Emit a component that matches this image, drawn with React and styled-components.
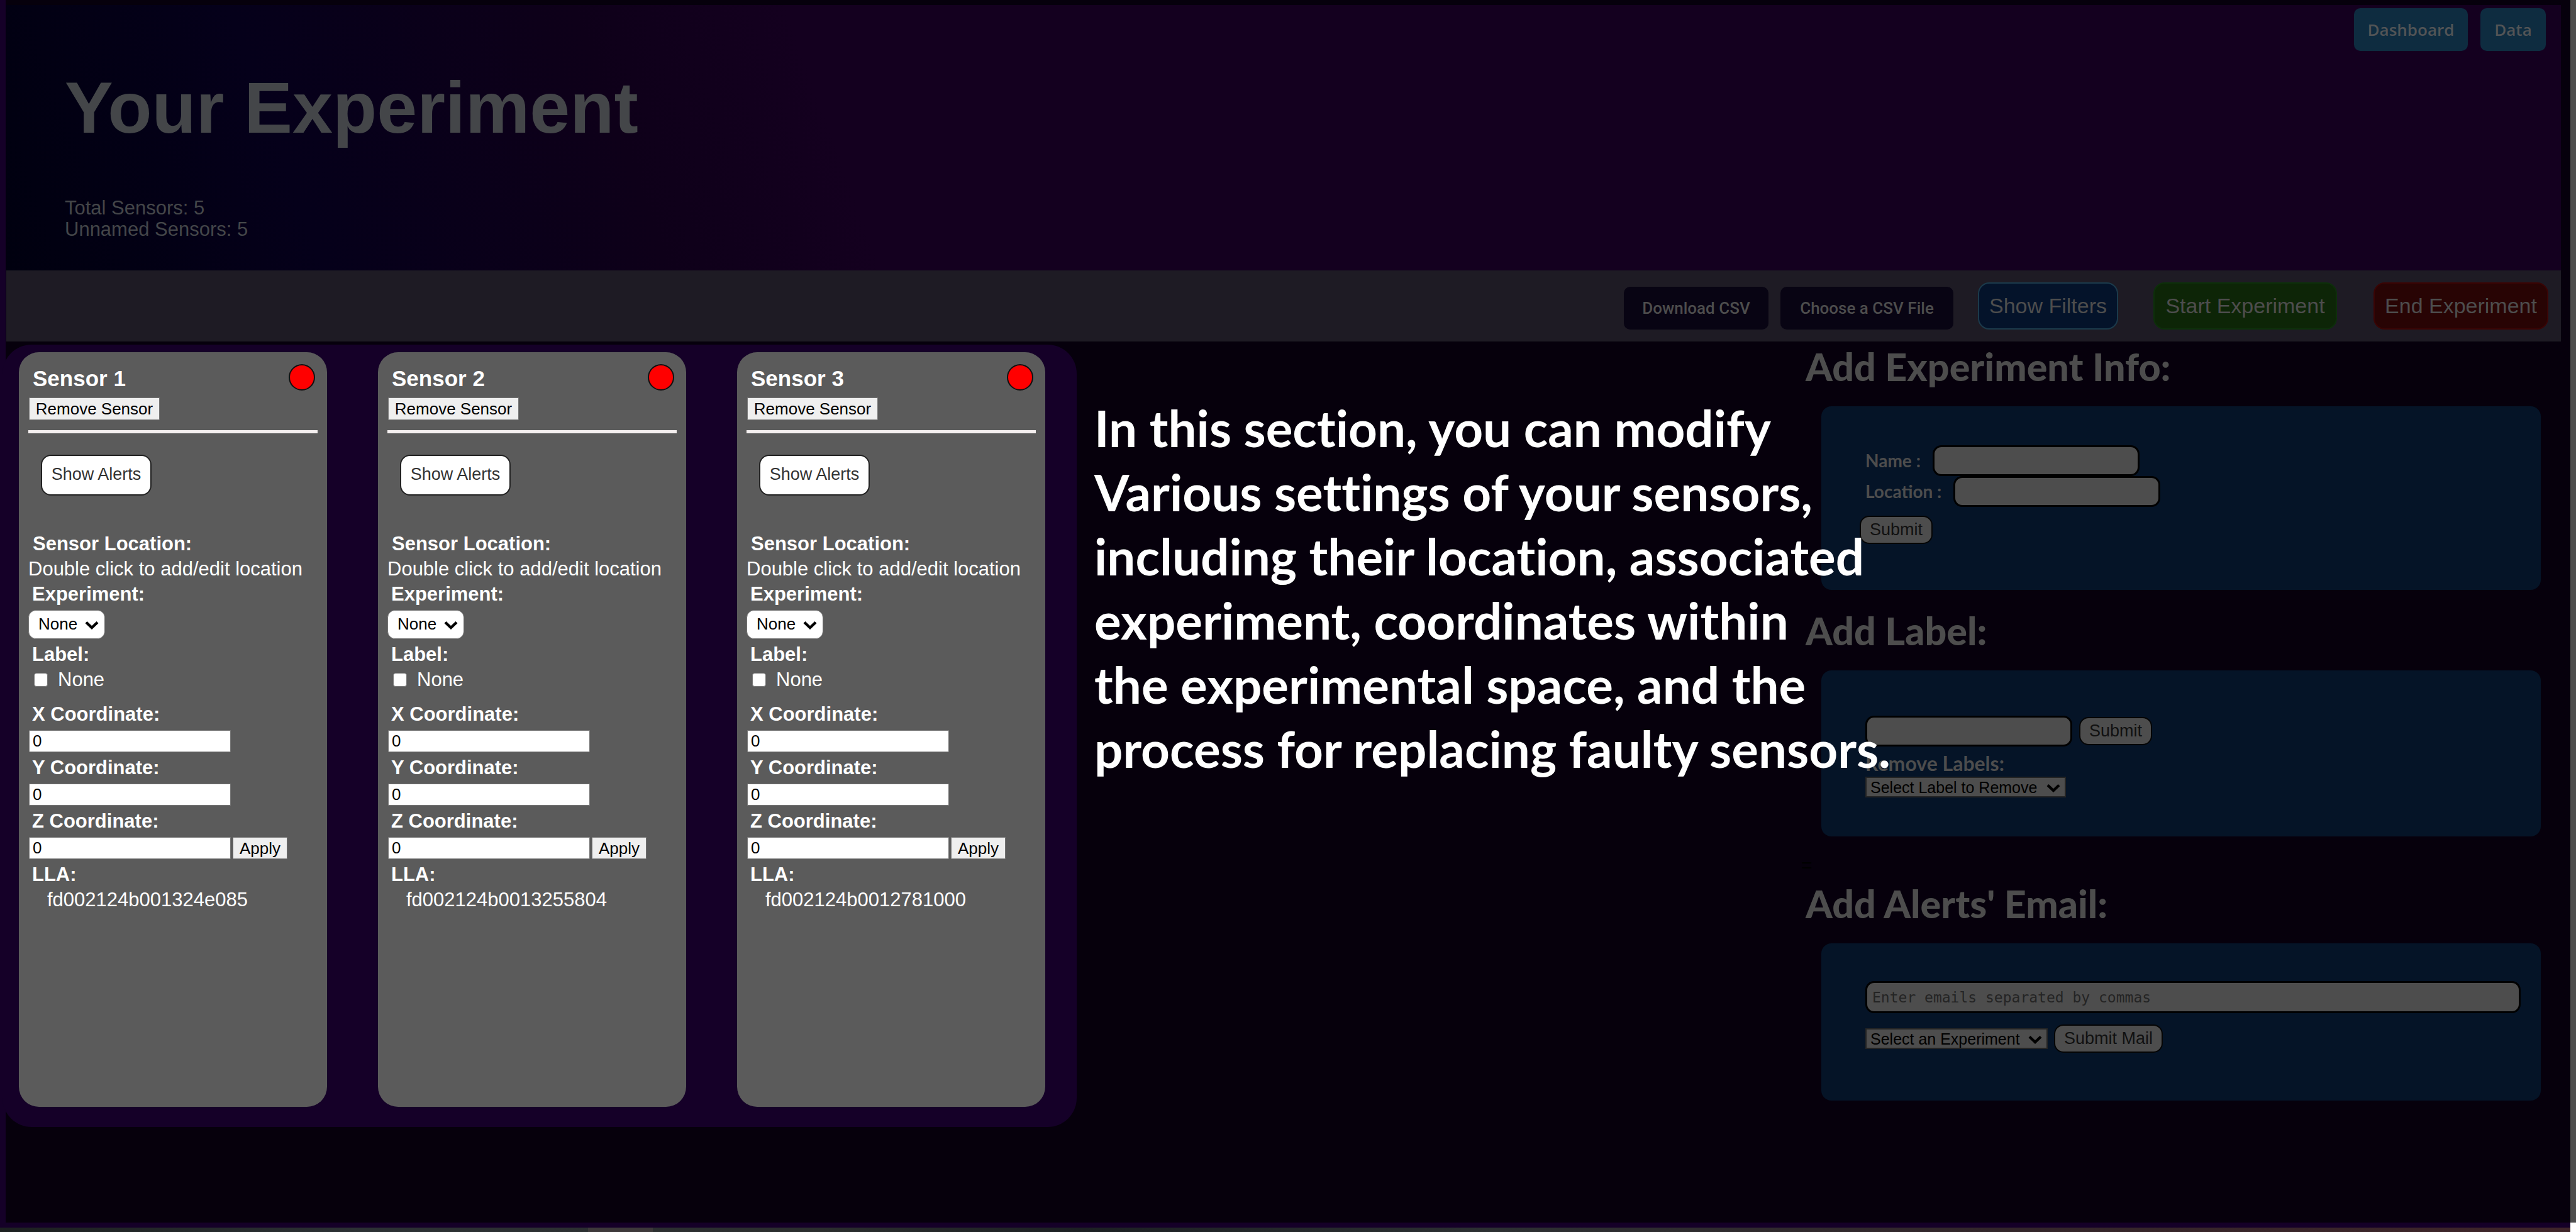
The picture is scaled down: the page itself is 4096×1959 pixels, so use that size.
import React, { useId } from "react";
import styled, { createGlobalStyle, css } from "styled-components";

const sans = `"Liberation Sans", Arial, sans-serif`;
const humanist = `Lato, "Open Sans", sans-serif`;

const GlobalStyle = createGlobalStyle`
  *, *::before, *::after { box-sizing: border-box; }
  html, body { margin: 0; }
  body { background: #150028; font-family: ${sans}; }
  button, input, select { margin: 0; font-family: ${sans}; }
  h1, h2, h3, p { margin: 0; }
`;

const Screen = styled.div`
  position: relative;
  display: flex;
  min-height: 100vh;
  overflow: hidden;
  background: #150028;
`;

const Desktop = styled.div`
  flex: 1;
  min-width: 0;
  display: flex;
  flex-direction: column;
`;

const Page = styled.div`
  flex: 1;
  margin: 0 0 8px 9px;
  padding: 8px 15px 0 1px;
  background: #06000c;
`;

const ScrollTrack = styled.div`
  width: 9px;
  border-bottom: 15px solid #fff;
  background: #4d4d4d;
`;

const TaskBar = styled.footer`
  height: 7px;
  background: linear-gradient(90deg, #1c2020 0%, #2c3134 14%, #2b2e2e 32%, #1c2023 42%, #2c3032 58%, #33262a 78%, #3f2529 100%);
`;

const TaskMark = styled.div`
  width: 103px;
  height: 7px;
  margin-left: 935px;
  background: #3d393a;
`;

const Header = styled.header`
  display: flex;
  justify-content: space-between;
  height: 422px;
  background: linear-gradient(70deg, #00000f 0%, #05001a 12%, #0e0019 25%, #14001f 33%, #14001f 100%);
`;

const Intro = styled.div`
  padding: 97px 0 0 93px;
  color: #444649;
`;

const Title = styled.h1`
  font-size: 115px;
  line-height: 132px;
`;

const Counts = styled.p`
  margin-top: 77px;
  font-size: 31px;
  line-height: 34px;
`;

const Nav = styled.nav`
  display: flex;
  align-items: flex-start;
  gap: 20px;
  padding: 5px 24px 0 0;
`;

const NavLink = styled.a`
  width: ${(p) => p.$width}px;
  border-radius: 10px;
  background: #0e2c40;
  color: #525456;
  font: 600 26px/68px "Open Sans", "Noto Sans", sans-serif;
  text-align: center;
  text-decoration: none;
`;

const Toolbar = styled.div`
  display: flex;
  align-items: flex-end;
  justify-content: flex-end;
  height: 113px;
  padding: 0 20px 19px 0;
  background: #1e1b24;
`;

const FileButton = styled.button`
  width: ${(p) => p.$width}px;
  height: 68px;
  margin-right: ${(p) => p.$after}px;
  padding: 0;
  border: 0;
  border-radius: 10px;
  background: #080413;
  color: #4d4d4d;
  font: 500 26px Roboto, ${sans};
`;

const ActionButton = styled.button`
  width: ${(p) => p.$width}px;
  height: 75px;
  margin-left: ${(p) => p.$before}px;
  padding: 0;
  border: 2px solid ${(p) => p.$edge};
  border-radius: 18px;
  background: ${(p) => p.$fill};
  color: #4d4d4d;
  font-size: 34px;
`;

const Main = styled.main`
  display: flex;
  align-items: flex-start;
  justify-content: space-between;
  padding-top: 5px;
`;

const SensorBoard = styled.section`
  display: flex;
  gap: 81px;
  margin-left: -6px;
  padding: 12px 50px 32px 26px;
  border-radius: 46px;
  background: #150028;
`;

const Card = styled.article`
  display: flex;
  flex-direction: column;
  align-items: flex-start;
  width: 490px;
  height: 1200px;
  padding: 19px 15px 0;
  border-radius: 32px;
  background: #5b5b5b;
  color: #fff;
`;

const CardHead = styled.div`
  display: flex;
  justify-content: space-between;
  align-self: stretch;
  padding: 0 4px 0 7px;
`;

const CardTitle = styled.h2`
  font-size: 35px;
  line-height: 46px;
`;

const StatusDot = styled.span`
  width: 42px;
  height: 42px;
  border: 2px solid #111;
  border-radius: 50%;
  background: #f00;
`;

const plainControl = css`
  border: 1px solid #767676;
  border-radius: 0;
  color: #000;
  font-size: 26px;
  line-height: 30px;
`;

const PlainButton = styled.button`
  ${plainControl}
  width: ${(p) => p.$width}px;
  height: 36px;
  padding: 0;
  background: #efefef;
`;

const RemoveButton = styled(PlainButton)`
  margin: 7px 0 0 1px;
`;

const Rule = styled.hr`
  align-self: stretch;
  height: 5px;
  margin: 16px 0 34px;
  border: 0;
  background: #f5f0f0;
`;

const AlertsButton = styled.button`
  width: 176px;
  height: 65px;
  margin: 0 0 57px 20px;
  padding: 0 0 2px;
  border: 2px solid #222;
  border-radius: 16px;
  background: #fff;
  color: #333;
  font-size: 27px;
`;

const Caption = styled.div`
  padding-left: ${(p) => p.$indent || 6}px;
  font-size: 31px;
  font-weight: bold;
  line-height: 40px;
`;

const Value = styled.p`
  padding-left: ${(p) => p.$indent || 0}px;
  font-size: 31px;
  line-height: 40px;
`;

const SelectBox = styled.span`
  position: relative;
  display: inline-flex;
  color: #000;

  svg {
    position: absolute;
    right: ${(p) => p.$inset}px;
    top: 50%;
    width: 22px;
    height: 14px;
    margin-top: -6px;
    pointer-events: none;
  }
`;

const RoundSelect = styled.select`
  appearance: none;
  width: 122px;
  height: 46px;
  margin: 5px 0;
  padding: 0 0 2px 15px;
  border: 1px solid #767676;
  border-radius: 12px;
  background: #fff;
  color: #000;
  font-size: 26px;
`;

const CheckRow = styled.label`
  display: flex;
  align-items: center;
  gap: 16px;
  height: 40px;
  margin-bottom: 15px;
  padding-left: 9px;
  font-size: 31px;
`;

const Check = styled.input`
  appearance: none;
  width: 22px;
  height: 22px;
  border: 1px solid #767676;
  border-radius: 4px;
  background: #fff;
`;

const CoordRow = styled.div`
  display: flex;
  gap: 3px;
  margin: 5px 0 5px 1px;
`;

const CoordInput = styled.input`
  ${plainControl}
  width: 321px;
  height: 35px;
  padding: 0 5px;
  background: #fff;
`;

const ApplyButton = styled(PlainButton)`
  height: 35px;
`;

const Sidebar = styled.aside`
  width: 1208px;
  padding-right: 32px;
  color: #4d4d4d;
`;

const SideTitle = styled.h2`
  margin-top: ${(p) => p.$before}px;
  padding-left: 7px;
  font: 900 61px/70px ${humanist};
`;

const Panel = styled.form`
  display: flex;
  flex-direction: column;
  align-items: flex-start;
  height: ${(p) => p.$height}px;
  margin: 28px 0 0 32px;
  padding: ${(p) => p.$top}px 32px 0 70px;
  border-radius: 16px;
  background: #051427;
`;

const FieldRow = styled.div`
  display: flex;
  align-items: center;
  gap: ${(p) => p.$gap}px;
  align-self: stretch;
  margin-top: ${(p) => p.$before || 0}px;
`;

const FieldLabel = styled.label`
  padding-bottom: 2px;
  font: bold 28px/34px ${humanist};
`;

const GroupLabel = styled(FieldLabel)`
  padding: 10px 0 4px;
  font-size: 32px;
`;

const Field = styled.input`
  width: 329px;
  height: 49px;
  padding: 0 8px;
  border: 3px solid #000;
  border-radius: 14px;
  background: #4d4d4d;
  color: #000;
  font-size: 26px;
`;

const MailField = styled(Field)`
  width: 100%;
  height: 51px;
  font-family: "DejaVu Sans Mono", monospace;
  font-size: 23px;

  &::placeholder { color: #242424; opacity: 1; }
`;

const SubmitButton = styled.button`
  width: ${(p) => p.$width}px;
  height: 45px;
  padding: 0;
  border: 2px solid #050505;
  border-radius: 15px;
  background: #4d4d4d;
  color: #111;
  font-size: 27px;
`;

const FirstSubmit = styled(SubmitButton)`
  margin: 14px 0 0 -9px;
`;

const FlatSelect = styled.select`
  appearance: none;
  width: ${(p) => p.$width}px;
  height: 33px;
  padding: 0 0 0 6px;
  border: 2px solid #242424;
  border-radius: 0;
  background: #4d4d4d;
  color: #000;
  font-size: 25px;
  line-height: 28px;
`;

const Stray = styled.div`
  height: 40px;
  margin-top: 26px;
  color: #000;
  font: 30px/40px ${sans};
`;

const Callout = styled.p`
  position: absolute;
  left: 1740px;
  top: 629px;
  color: #fff;
  font: bold 80px/102px ${humanist};
  font-variant-ligatures: none;
  white-space: nowrap;

  span { display: block; }
`;

const Chevron = () => (
  <svg viewBox="0 0 22 14" fill="none" aria-hidden="true">
    <path d="M2 2.5 L11 11 L20 2.5" stroke="currentColor" strokeWidth="4.4" />
  </svg>
);

const sensors = [
  { name: "Sensor 1", lla: "fd002124b001324e085" },
  { name: "Sensor 2", lla: "fd002124b0013255804" },
  { name: "Sensor 3", lla: "fd002124b0012781000" },
];

function Coordinate({ axis, children }) {
  const id = useId();
  return (
    <>
      <Caption as="label" htmlFor={id}>{axis} Coordinate:</Caption>
      <CoordRow>
        <CoordInput id={id} type="text" defaultValue="0" />
        {children}
      </CoordRow>
    </>
  );
}

function SensorCard({ name, lla }) {
  const id = useId();
  return (
    <Card>
      <CardHead>
        <CardTitle>{name}</CardTitle>
        <StatusDot />
      </CardHead>
      <RemoveButton type="button" $width={208}>Remove Sensor</RemoveButton>
      <Rule />
      <AlertsButton type="button">Show Alerts</AlertsButton>
      <Caption $indent={7}>Sensor Location:</Caption>
      <Value>Double click to add/edit location</Value>
      <Caption as="label" htmlFor={id}>Experiment:</Caption>
      <SelectBox $inset={10}>
        <RoundSelect id={id}>
          <option>None</option>
        </RoundSelect>
        <Chevron />
      </SelectBox>
      <Caption>Label:</Caption>
      <CheckRow>
        <Check type="checkbox" />
        None
      </CheckRow>
      <Coordinate axis="X" />
      <Coordinate axis="Y" />
      <Coordinate axis="Z">
        <ApplyButton type="button" $width={87}>Apply</ApplyButton>
      </Coordinate>
      <Caption>LLA:</Caption>
      <Value $indent={30}>{lla}</Value>
    </Card>
  );
}

export default function App() {
  return (
    <Screen>
      <GlobalStyle />
      <Desktop>
        <Page>
          <Header>
            <Intro>
              <Title>Your Experiment</Title>
              <Counts>
                Total Sensors: 5<br />
                Unnamed Sensors: 5
              </Counts>
            </Intro>
            <Nav>
              <NavLink href="#dashboard" $width={181}>Dashboard</NavLink>
              <NavLink href="#data" $width={104}>Data</NavLink>
            </Nav>
          </Header>
          <Toolbar>
            <FileButton type="button" $width={230} $after={19}>Download CSV</FileButton>
            <FileButton type="button" $width={275} $after={39}>Choose a CSV File</FileButton>
            <ActionButton type="button" $width={223} $before={0} $fill="#04132a" $edge="#1b3a4b">Show Filters</ActionButton>
            <ActionButton type="button" $width={292} $before={56} $fill="#0d2507" $edge="#0d300a">Start Experiment</ActionButton>
            <ActionButton type="button" $width={278} $before={58} $fill="#280404" $edge="#3a0404">End Experiment</ActionButton>
          </Toolbar>
          <Main>
            <SensorBoard>
              {sensors.map((s) => <SensorCard key={s.name} {...s} />)}
            </SensorBoard>
            <Sidebar>
              <SideTitle $before={0}>Add Experiment Info:</SideTitle>
              <Panel $height={292} $top={62}>
                <FieldRow $gap={19}>
                  <FieldLabel htmlFor="exp-name">Name :</FieldLabel>
                  <Field id="exp-name" type="text" />
                </FieldRow>
                <FieldRow $gap={19}>
                  <FieldLabel htmlFor="exp-location">Location :</FieldLabel>
                  <Field id="exp-location" type="text" />
                </FieldRow>
                <FirstSubmit type="button" $width={116}>Submit</FirstSubmit>
              </Panel>
              <SideTitle $before={30}>Add Label:</SideTitle>
              <Panel $height={264} $top={72}>
                <FieldRow $gap={11}>
                  <Field aria-label="Label" type="text" />
                  <SubmitButton type="button" $width={116}>Submit</SubmitButton>
                </FieldRow>
                <GroupLabel htmlFor="remove-label">Remove Labels:</GroupLabel>
                <SelectBox $inset={9}>
                  <FlatSelect id="remove-label" $width={319}>
                    <option>Select Label to Remove</option>
                  </FlatSelect>
                  <Chevron />
                </SelectBox>
              </Panel>
              <Stray>=</Stray>
              <SideTitle $before={6}>Add Alerts' Email:</SideTitle>
              <Panel $height={250} $top={60}>
                <MailField aria-label="Emails" type="text" placeholder="Enter emails separated by commas" />
                <FieldRow $gap={10} $before={18}>
                  <SelectBox $inset={9}>
                    <FlatSelect aria-label="Experiment" $width={290}>
                      <option>Select an Experiment</option>
                    </FlatSelect>
                    <Chevron />
                  </SelectBox>
                  <SubmitButton type="button" $width={173}>Submit Mail</SubmitButton>
                </FieldRow>
              </Panel>
            </Sidebar>
          </Main>
        </Page>
        <TaskBar><TaskMark /></TaskBar>
      </Desktop>
      <ScrollTrack />
      <Callout>
        <span>In this section, you can modify</span>
        <span>Various settings of your sensors,</span>
        <span>including their location, associated</span>
        <span>experiment, coordinates within</span>
        <span>the experimental space, and the</span>
        <span>process for replacing faulty sensors.</span>
      </Callout>
    </Screen>
  );
}
